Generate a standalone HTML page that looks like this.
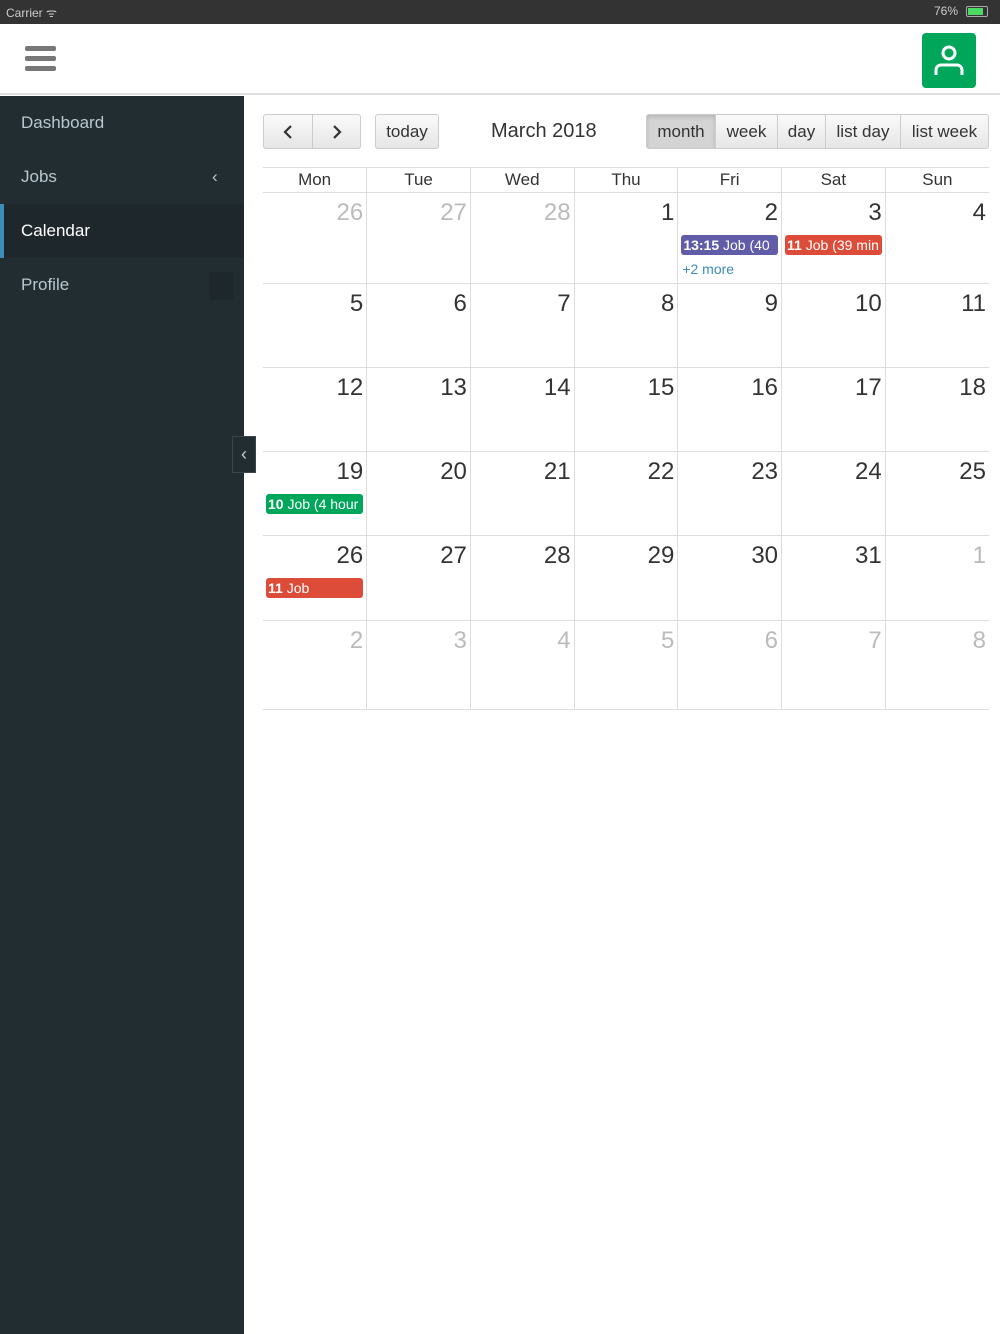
<!DOCTYPE html>
<html><head><style>
*{margin:0;padding:0;box-sizing:border-box}
body{width:1000px;height:1334px;position:relative;background:#fff;font-family:"Liberation Sans",sans-serif;overflow:hidden}
.sb{position:absolute;top:0;left:0;width:1000px;height:24px;background:#333;color:#ccc;font-size:12px}
.top{position:absolute;top:24px;left:0;width:1000px;height:71px;background:#fff;border-bottom:2px solid #ddd}
.side{position:absolute;top:96px;left:0;width:244px;height:1238px;background:#222d32}
.side div{height:54px;line-height:54px;padding-left:21px;color:#b8c7ce;font-size:17px;position:relative}
.btn{position:absolute;top:114px;height:35px;border:1px solid #ccc;background:linear-gradient(#fafafa,#e6e6e6);font-size:17px;color:#333;text-align:center;line-height:33px;border-radius:3px}
.grid{position:absolute;left:263px;top:167px;width:726px}
table{border-collapse:collapse;width:726px;table-layout:fixed}
td,th{border:1px solid #ddd;vertical-align:top}
th{font-weight:normal;font-size:17px;color:#333;height:25px;line-height:24px}
td{position:relative;font-size:24px;color:#333;text-align:right;padding:6px 3px 0 0}
td.o{color:#bbb}
tr td:first-child,tr th:first-child{border-left:none}
tr td:last-child,tr th:last-child{border-right:none}
.ev{position:absolute;left:3px;right:3px;height:20px;border-radius:3px;color:#fff;font-size:14px;line-height:20px;text-align:left;padding-left:2px;white-space:nowrap;overflow:hidden;top:42px}
</style></head><body>
<div class="sb"><span style="position:absolute;left:6px;top:4px">Carrier ᯤ</span><span style="position:absolute;right:42px;top:4px">76%</span><div style="position:absolute;right:12px;top:6px;width:22px;height:11px;border:1px solid #aaa;border-radius:2px;padding:1px"><div style="width:15px;height:7px;background:#4cd964"></div></div></div>
<div class="top">
<div style="position:absolute;left:25px;top:22px;width:31px;height:5px;background:#777;border-radius:2px"></div>
<div style="position:absolute;left:25px;top:32px;width:31px;height:5px;background:#777;border-radius:2px"></div>
<div style="position:absolute;left:25px;top:42px;width:31px;height:5px;background:#777;border-radius:2px"></div>
<div style="position:absolute;left:922px;top:9px;width:54px;height:55px;background:#00a65a;border-radius:4px">
<svg width="54" height="55" viewBox="0 0 54 55"><circle cx="27" cy="20" r="6" fill="none" stroke="#fff" stroke-width="3"/><path d="M14 42v-5a5 5 0 0 1 5-5h16a5 5 0 0 1 5 5v5" fill="none" stroke="#fff" stroke-width="3"/></svg></div>
</div>
<div class="side">
<div>Dashboard</div>
<div>Jobs<span style="position:absolute;left:212px">‹</span></div>
<div style="background:#1e282c;color:#fff;border-left:4px solid #3c8dbc;padding-left:17px">Calendar</div>
<div>Profile<span style="position:absolute;left:209px;top:14px;width:24px;height:28px;background:#1e282c"></span></div>
</div>
<div style="position:absolute;left:232px;top:436px;width:24px;height:37px;background:#222d32;border:1px solid #3a464b;color:#ccc;text-align:center;line-height:34px;font-size:18px">‹</div>
<div class="btn" style="left:263px;width:50px;border-radius:3px 0 0 3px"><svg width="12" height="16" viewBox="0 0 12 16" style="margin-top:9px"><path d="M9 2L3 8l6 6" fill="none" stroke="#333" stroke-width="2.2"/></svg></div>
<div class="btn" style="left:312px;width:49px;border-radius:0 3px 3px 0"><svg width="12" height="16" viewBox="0 0 12 16" style="margin-top:9px"><path d="M3 2l6 6-6 6" fill="none" stroke="#333" stroke-width="2.2"/></svg></div>
<div class="btn" style="left:375px;width:64px">today</div>
<div style="position:absolute;left:491px;top:120px;font-size:20px;color:#333">March 2018</div>
<div class="btn" style="left:646px;width:70px;background:#d4d4d4;border-radius:3px 0 0 3px;box-shadow:inset 0 2px 4px rgba(0,0,0,.15)">month</div>
<div class="btn" style="left:715px;width:63px;border-radius:0">week</div>
<div class="btn" style="left:777px;width:49px;border-radius:0">day</div>
<div class="btn" style="left:825px;width:76px;border-radius:0">list day</div>
<div class="btn" style="left:900px;width:89px;border-radius:0 3px 3px 0">list week</div>
<div class="grid"><table>
<tr><th>Mon</th><th>Tue</th><th>Wed</th><th>Thu</th><th>Fri</th><th>Sat</th><th>Sun</th></tr>
<tr style="height:91px"><td class="o">26</td><td class="o">27</td><td class="o">28</td><td>1</td><td>2<div class="ev" style="background:#605ca8"><b>13:15</b> Job (40</div><div style="position:absolute;left:4px;top:68px;font-size:14px;color:#3c8dbc">+2 more</div></td><td>3<div class="ev" style="background:#dd4b39"><b>11</b> Job (39 min</div></td><td>4</td></tr>
<tr style="height:84px"><td>5</td><td>6</td><td>7</td><td>8</td><td>9</td><td>10</td><td>11</td></tr>
<tr style="height:84px"><td>12</td><td>13</td><td>14</td><td>15</td><td>16</td><td>17</td><td>18</td></tr>
<tr style="height:84px"><td>19<div class="ev" style="background:#00a65a"><b>10</b> Job (4 hour</div></td><td>20</td><td>21</td><td>22</td><td>23</td><td>24</td><td>25</td></tr>
<tr style="height:85px"><td>26<div class="ev" style="background:#dd4b39"><b>11</b> Job</div></td><td>27</td><td>28</td><td>29</td><td>30</td><td>31</td><td class="o">1</td></tr>
<tr style="height:89px"><td class="o">2</td><td class="o">3</td><td class="o">4</td><td class="o">5</td><td class="o">6</td><td class="o">7</td><td class="o">8</td></tr>
</table></div>
</body></html>
